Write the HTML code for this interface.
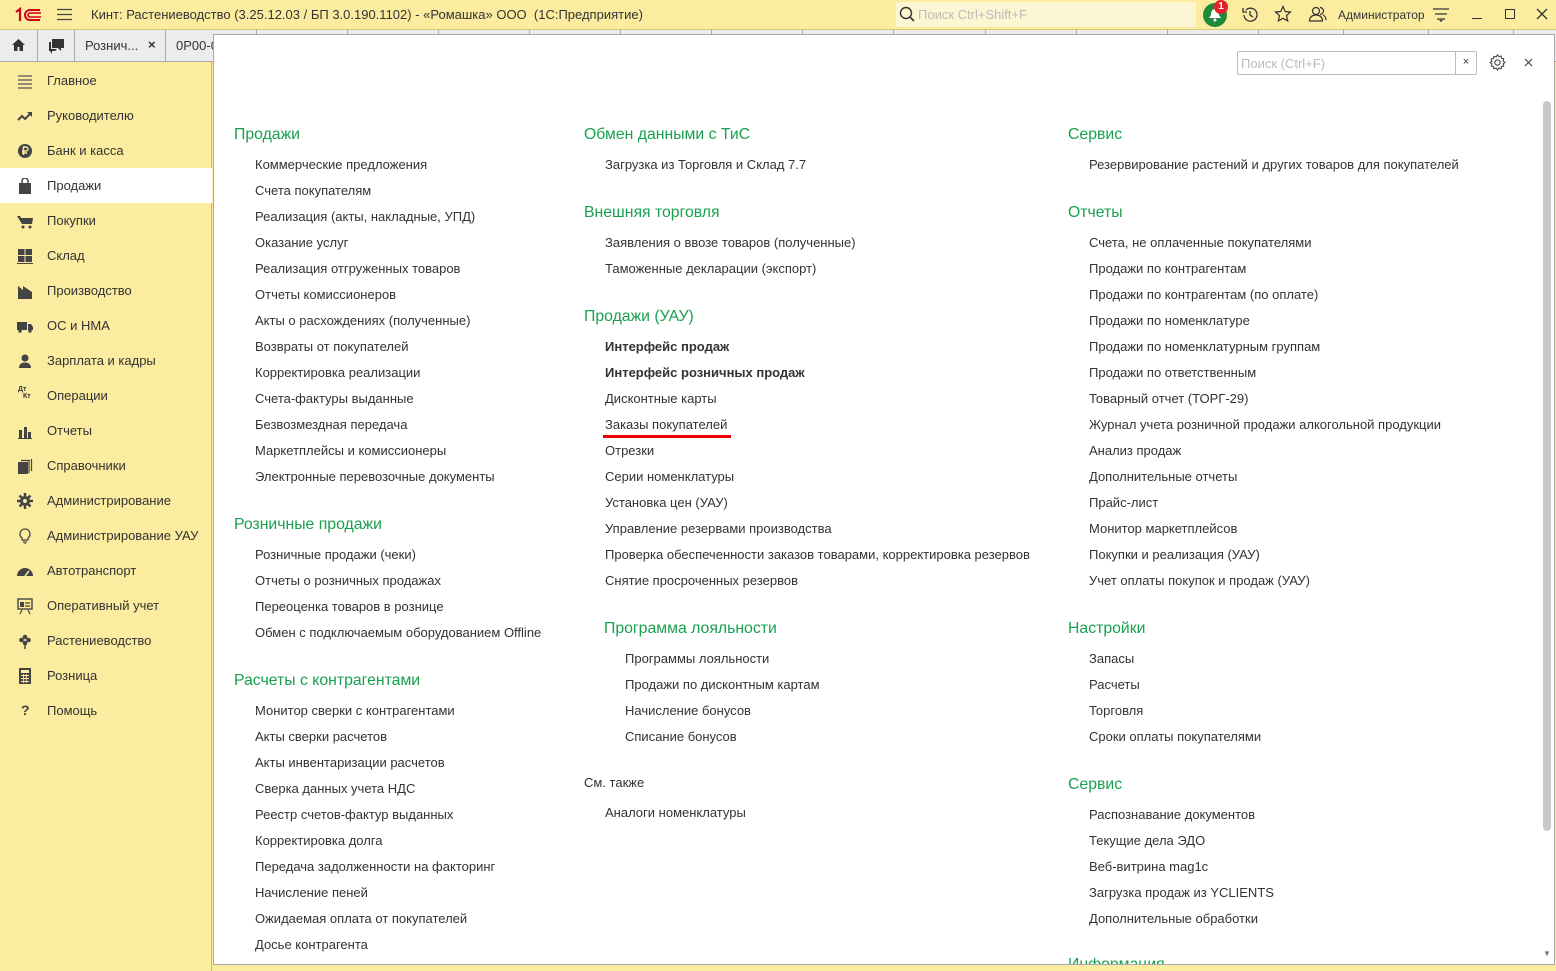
<!DOCTYPE html>
<html><head><meta charset="utf-8"><style>
*{margin:0;padding:0;box-sizing:border-box}
body{width:1556px;height:971px;overflow:hidden;background:#fbeca0;font-family:"Liberation Sans",sans-serif;font-size:13px;color:#333;position:relative}
.title{position:absolute;left:0;top:0;width:1556px;height:30px;background:#fbeca0;border-bottom:1px solid #d9c97a}
.tabs{position:absolute;left:0;top:30px;width:1556px;height:32px;background:#ececec;border-bottom:1px solid #aaa}
.tab{position:absolute;top:0;height:32px;border-right:1px solid #aaa}
.side{position:absolute;left:0;top:62px;width:212px;height:909px;background:#fbeca0;border-right:1px solid #b8b8b8}
.si{position:absolute;left:0;width:212px;height:35px;line-height:35px;padding-left:47px;font-size:13px;color:#333}
.si.sel{background:#fff}
.ic{position:absolute;left:17px;top:10px;width:16px;height:16px}
.panel{position:absolute;left:213px;top:34px;width:1342px;height:931px;background:#fff;border:1px solid #aaa;overflow:hidden}
.g{position:absolute}
.g h3{font-weight:normal;font-size:15.8px;color:#19a04f;line-height:20px;height:22px;padding-top:2px;white-space:nowrap}
.g ul{list-style:none;margin-top:7px;padding-left:21px}
.g li{line-height:26px;height:26px;white-space:nowrap}
.b{font-weight:bold}
</style></head><body>
<div class="title">
 <svg style="position:absolute;left:14px;top:7px" width="30" height="16" viewBox="0 0 30 16"><path d="M2 5l4-3v12" stroke="#d2001e" stroke-width="2.2" fill="none"/><path d="M26 3H16a5 5 0 0 0 0 10h10" stroke="#d2001e" stroke-width="2" fill="none"/><path d="M27 6H16a2 2 0 0 0 0 4h11" stroke="#d2001e" stroke-width="1.6" fill="none"/></svg>
 <svg style="position:absolute;left:57px;top:8px" width="15" height="13"><path d="M0 1.5h15M0 6.5h15M0 11.5h15" stroke="#444" stroke-width="1.3"/></svg>
 <div style="position:absolute;left:91px;top:7px;font-size:13px;color:#333">Кинт: Растениеводство (3.25.12.03 / БП 3.0.190.1102) - «Ромашка» ООО &nbsp;(1С:Предприятие)</div>
 <div style="position:absolute;left:896px;top:2px;width:300px;height:25px;background:#fdf6d3;border-radius:2px"></div>
 <svg style="position:absolute;left:899px;top:6px" width="16" height="17"><circle cx="7" cy="7" r="5.5" stroke="#333" stroke-width="1.4" fill="none"/><path d="M11 11l4 4" stroke="#333" stroke-width="1.6"/></svg>
 <div style="position:absolute;left:918px;top:7px;color:#bbb">Поиск Ctrl+Shift+F</div>
 <div style="position:absolute;left:1203px;top:3px;width:24px;height:24px;border-radius:50%;background:#1e8a3c"></div>
 <svg style="position:absolute;left:1208px;top:7px" width="14" height="16"><path d="M7 2c-3 0-4 3-4 6l-2 3h12l-2-3c0-3-1-6-4-6z" fill="#fff"/><circle cx="7" cy="13" r="1.5" fill="#fff"/></svg>
 <div style="position:absolute;left:1214px;top:0;width:14px;height:14px;border-radius:50%;background:#e4202c;color:#fff;font-size:10px;font-weight:bold;text-align:center;line-height:14px">1</div>
 <svg style="position:absolute;left:1241px;top:6px" width="18" height="18"><path d="M3 9a6.5 6.5 0 1 0 2-5" stroke="#333" stroke-width="1.3" fill="none"/><path d="M2 2v4h4" stroke="#333" stroke-width="1.3" fill="none"/><path d="M9 5v4l3 2" stroke="#333" stroke-width="1.3" fill="none"/></svg>
 <svg style="position:absolute;left:1274px;top:5px" width="18" height="18"><path d="M9 1.5l2.2 5 5.3.5-4 3.6 1.2 5.3L9 13.2 4.3 15.9l1.2-5.3-4-3.6 5.3-.5z" stroke="#333" stroke-width="1.2" fill="none"/></svg>
 <svg style="position:absolute;left:1308px;top:5px" width="19" height="18"><circle cx="8" cy="6" r="3.5" stroke="#333" stroke-width="1.2" fill="none"/><path d="M1.5 16c0-4 3-6 6.5-6s6.5 2 6.5 6z" stroke="#333" stroke-width="1.2" fill="none"/><path d="M12 2.5a3.5 3.5 0 0 1 0 7M15 10c2 1 3 3 3 5" stroke="#333" stroke-width="1.2" fill="none"/></svg>
 <div style="position:absolute;left:1338px;top:8px;font-size:12px">Администратор</div>
 <svg style="position:absolute;left:1433px;top:8px" width="16" height="15"><path d="M0 1h16M2 6h12M4 11h8" stroke="#333" stroke-width="1.3"/><path d="M6 12l2 2 2-2z" fill="#333"/></svg>
 <div style="position:absolute;left:1472px;top:18px;width:10px;height:1px;background:#333"></div>
 <div style="position:absolute;left:1505px;top:9px;width:10px;height:10px;border:1.3px solid #333"></div>
 <svg style="position:absolute;left:1536px;top:8px" width="12" height="12"><path d="M1 1l10 10M11 1L1 11" stroke="#333" stroke-width="1.3"/></svg>
</div>
<div class="tabs">
 <div class="tab" style="left:0;width:38px"><svg style="position:absolute;left:11px;top:8px" width="15" height="14"><path d="M7.5 1L1 7h2v6h3.5V9h2v4H12V7h2z" fill="#333"/></svg></div>
 <div class="tab" style="left:38px;width:37px"><svg style="position:absolute;left:10px;top:8px" width="17" height="16"><path d="M4 1h12v9h-3v3l-3-3H4z" fill="#333"/><path d="M1 4h2v7h6l-2 2H4v3l-2-3H1z" fill="#333"/></svg></div>
 <div class="tab" style="left:75px;width:91px"><span style="position:absolute;left:10px;top:8px">Рознич...</span><span style="position:absolute;left:73px;top:7px;font-weight:bold">×</span></div>
 <div class="tab" style="left:166px;width:91px"><span style="position:absolute;left:10px;top:8px">0Р00-0</span></div>
 <div class="tab" style="left:257px;width:91px"></div><div class="tab" style="left:348px;width:91px"></div><div class="tab" style="left:439px;width:91px"></div><div class="tab" style="left:530px;width:91px"></div><div class="tab" style="left:621px;width:91px"></div><div class="tab" style="left:712px;width:91px"></div><div class="tab" style="left:803px;width:91px"></div><div class="tab" style="left:894px;width:92px"></div><div class="tab" style="left:986px;width:91px"></div><div class="tab" style="left:1077px;width:91px"></div><div class="tab" style="left:1168px;width:91px"></div><div class="tab" style="left:1259px;width:85px"></div><div class="tab" style="left:1344px;width:85px"></div><div class="tab" style="left:1429px;width:85px"></div>
</div>
<div class="side">
 <div class="si" style="top:1px"><svg class="ic" viewBox="0 0 16 16"><path d="M1 3h14M1 7h14M1 11h14M1 15h14" stroke="#555" stroke-width="1.2"/></svg>Главное</div>
 <div class="si" style="top:36px"><svg class="ic" viewBox="0 0 16 16"><path d="M1 12l4-4 3 3 6-6" stroke="#444" stroke-width="2" fill="none"/><path d="M10 4h5v5z" fill="#444"/></svg>Руководителю</div>
 <div class="si" style="top:71px"><svg class="ic" viewBox="0 0 16 16"><circle cx="8" cy="8" r="7" fill="#444"/><path d="M6.5 12V4h2.5a2 2 0 0 1 0 4H5M5 10h5" stroke="#fbeca0" stroke-width="1.4" fill="none"/></svg>Банк и касса</div>
 <div class="si sel" style="top:106px"><svg class="ic" viewBox="0 0 16 16"><rect x="2" y="5" width="12" height="11" fill="#444"/><path d="M5 6V3a3 3 0 0 1 6 0v3" stroke="#444" stroke-width="1.5" fill="none"/></svg>Продажи</div>
 <div class="si" style="top:141px"><svg class="ic" viewBox="0 0 16 16"><path d="M0 3h3l1 2h12l-1 6H5z" fill="#444"/><circle cx="6" cy="14" r="1.5" fill="#444"/><circle cx="13" cy="14" r="1.5" fill="#444"/></svg>Покупки</div>
 <div class="si" style="top:176px"><svg class="ic" viewBox="0 0 16 16"><rect x="1" y="1" width="6.5" height="6" fill="#444"/><rect x="8.5" y="1" width="6.5" height="6" fill="#444"/><rect x="1" y="8" width="6.5" height="6" fill="#444"/><rect x="8.5" y="8" width="6.5" height="6" fill="#444"/><rect x="0" y="15" width="16" height="1" fill="#444"/></svg>Склад</div>
 <div class="si" style="top:211px"><svg class="ic" viewBox="0 0 16 16"><path d="M1 16V3l5 4V3l9 6v7z" fill="#444"/></svg>Производство</div>
 <div class="si" style="top:246px"><svg class="ic" viewBox="0 0 16 16"><rect x="0" y="4" width="10" height="8" fill="#444"/><path d="M11 6h3l2 3v3h-5z" fill="#444"/><circle cx="3" cy="13" r="1.7" fill="#444"/><circle cx="13" cy="13" r="1.7" fill="#444"/></svg>ОС и НМА</div>
 <div class="si" style="top:281px"><svg class="ic" viewBox="0 0 16 16"><circle cx="8" cy="5" r="3.5" fill="#444"/><path d="M2 15c0-4 3-5.5 6-5.5s6 1.5 6 5.5z" fill="#444"/></svg>Зарплата и кадры</div>
 <div class="si" style="top:316px"><span style="position:absolute;left:18px;top:-6px;font-size:7px;font-weight:bold">Дт</span><span style="position:absolute;left:23px;top:1px;font-size:7px;font-weight:bold">Кт</span>Операции</div>
 <div class="si" style="top:351px"><svg class="ic" viewBox="0 0 16 16"><rect x="2" y="7" width="3" height="8" fill="#444"/><rect x="7" y="4" width="3" height="11" fill="#444"/><rect x="11" y="9" width="3" height="6" fill="#444"/><rect x="1" y="15" width="14" height="1" fill="#444"/></svg>Отчеты</div>
 <div class="si" style="top:386px"><svg class="ic" viewBox="0 0 16 16"><rect x="1" y="4" width="10" height="12" fill="#444"/><path d="M12 3v12M14.5 1v12M4 2.5h9" stroke="#444" stroke-width="1.2"/></svg>Справочники</div>
 <div class="si" style="top:421px"><svg class="ic" viewBox="0 0 16 16"><circle cx="8" cy="8" r="5" fill="#444"/><path d="M8 0v16M0 8h16M2.5 2.5l11 11M13.5 2.5l-11 11" stroke="#444" stroke-width="2.5"/><circle cx="8" cy="8" r="2" fill="#fbeca0"/></svg>Администрирование</div>
 <div class="si" style="top:456px"><svg class="ic" viewBox="0 0 16 16"><path d="M8 1a5 5 0 0 0-3 9v2h6v-2a5 5 0 0 0-3-9z" stroke="#444" stroke-width="1.3" fill="none"/><path d="M6 14h4M7 16h2" stroke="#444" stroke-width="1.3"/></svg>Администрирование УАУ</div>
 <div class="si" style="top:491px"><svg class="ic" viewBox="0 0 16 16"><path d="M0 13a8 8 0 0 1 16 0z" fill="#444"/><path d="M8 13l4-5" stroke="#fbeca0" stroke-width="1.5"/></svg>Автотранспорт</div>
 <div class="si" style="top:526px"><svg class="ic" viewBox="0 0 16 16"><rect x="1" y="1" width="14" height="10" stroke="#444" stroke-width="1.4" fill="none"/><rect x="3" y="4" width="4" height="5" fill="#444"/><path d="M8 5h5M8 8h5M5 12l-2 4M11 12l2 4" stroke="#444" stroke-width="1.2"/></svg>Оперативный учет</div>
 <div class="si" style="top:561px"><svg class="ic" viewBox="0 0 16 16"><circle cx="8" cy="4" r="2.3" fill="#444"/><circle cx="4.5" cy="7" r="2.3" fill="#444"/><circle cx="11.5" cy="7" r="2.3" fill="#444"/><circle cx="8" cy="10" r="2.3" fill="#444"/><path d="M8 11v5" stroke="#444" stroke-width="1.5"/></svg>Растениеводство</div>
 <div class="si" style="top:596px"><svg class="ic" viewBox="0 0 16 16"><rect x="2" y="0" width="12" height="16" fill="#444"/><rect x="4" y="2" width="8" height="3" fill="#fbeca0"/><path d="M4 7.5h8M4 10.5h8M4 13.5h8M6.6 6v9M9.3 6v9" stroke="#fbeca0" stroke-width=".9"/></svg>Розница</div>
 <div class="si" style="top:631px"><span style="position:absolute;left:21px;font-size:14px;font-weight:bold;color:#444">?</span>Помощь</div>
</div>
<div class="panel">
 <div style="position:absolute;left:1023px;top:16px;width:240px;height:24px;border:1px solid #bbb;border-radius:2px"><span style="position:absolute;left:3px;top:4px;color:#bbb;font-size:13px">Поиск (Ctrl+F)</span><div style="position:absolute;right:0;top:0;width:21px;height:22px;border-left:1px solid #bbb;text-align:center;line-height:21px;font-size:11px">×</div></div>
 <svg style="position:absolute;left:1275px;top:19px" width="17" height="17" viewBox="0 0 16 16"><path d="M8 0.8l1.3 1.7 2.1-.6.3 2.1 2.1.4-.6 2.1L15 8l-1.7 1.3.6 2.1-2.1.3-.4 2.1-2.1-.6L8 15l-1.3-1.7-2.1.6-.3-2.1-2.1-.4.6-2.1L1 8l1.7-1.3-.6-2.1 2.1-.3.4-2.1 2.1.6z" stroke="#444" stroke-width="1" fill="none"/><circle cx="8" cy="8" r="2.5" stroke="#444" stroke-width="1" fill="none"/></svg>
 <svg style="position:absolute;left:1310px;top:23px" width="9" height="9"><path d="M1 1l7 7M8 1L1 8" stroke="#444" stroke-width="1.2"/></svg>
 <div style="position:absolute;left:1329px;top:66px;width:8px;height:730px;background:#c8c8c8;border-radius:4px"></div>
 <div style="position:absolute;left:1329px;top:914px;font-size:8px;color:#777">▼</div>

 <div class="g" style="left:20px;top:88px"><h3>Продажи</h3><ul><li>Коммерческие предложения</li><li>Счета покупателям</li><li>Реализация (акты, накладные, УПД)</li><li>Оказание услуг</li><li>Реализация отгруженных товаров</li><li>Отчеты комиссионеров</li><li>Акты о расхождениях (полученные)</li><li>Возвраты от покупателей</li><li>Корректировка реализации</li><li>Счета-фактуры выданные</li><li>Безвозмездная передача</li><li>Маркетплейсы и комиссионеры</li><li>Электронные перевозочные документы</li></ul></div>
 <div class="g" style="left:20px;top:478px"><h3>Розничные продажи</h3><ul><li>Розничные продажи (чеки)</li><li>Отчеты о розничных продажах</li><li>Переоценка товаров в рознице</li><li>Обмен с подключаемым оборудованием Offline</li></ul></div>
 <div class="g" style="left:20px;top:634px"><h3>Расчеты с контрагентами</h3><ul><li>Монитор сверки с контрагентами</li><li>Акты сверки расчетов</li><li>Акты инвентаризации расчетов</li><li>Сверка данных учета НДС</li><li>Реестр счетов-фактур выданных</li><li>Корректировка долга</li><li>Передача задолженности на факторинг</li><li>Начисление пеней</li><li>Ожидаемая оплата от покупателей</li><li>Досье контрагента</li></ul></div>

 <div class="g" style="left:370px;top:88px"><h3>Обмен данными с ТиС</h3><ul><li>Загрузка из Торговля и Склад 7.7</li></ul></div>
 <div class="g" style="left:370px;top:166px"><h3>Внешняя торговля</h3><ul><li>Заявления о ввозе товаров (полученные)</li><li>Таможенные декларации (экспорт)</li></ul></div>
 <div class="g" style="left:370px;top:270px"><h3>Продажи (УАУ)</h3><ul><li class="b">Интерфейс продаж</li><li class="b">Интерфейс розничных продаж</li><li>Дисконтные карты</li><li>Заказы покупателей</li><li>Отрезки</li><li>Серии номенклатуры</li><li>Установка цен (УАУ)</li><li>Управление резервами производства</li><li>Проверка обеспеченности заказов товарами, корректировка резервов</li><li>Снятие просроченных резервов</li></ul></div>
 <div style="position:absolute;left:389px;top:400px;width:128px;height:3px;background:#e00"></div>
 <div class="g" style="left:390px;top:582px"><h3>Программа лояльности</h3><ul><li>Программы лояльности</li><li>Продажи по дисконтным картам</li><li>Начисление бонусов</li><li>Списание бонусов</li></ul></div>
 <div style="position:absolute;left:370px;top:740px;line-height:16px">См. также</div>
 <div style="position:absolute;left:391px;top:770px;line-height:16px">Аналоги номенклатуры</div>

 <div class="g" style="left:854px;top:88px"><h3>Сервис</h3><ul><li>Резервирование растений и других товаров для покупателей</li></ul></div>
 <div class="g" style="left:854px;top:166px"><h3>Отчеты</h3><ul><li>Счета, не оплаченные покупателями</li><li>Продажи по контрагентам</li><li>Продажи по контрагентам (по оплате)</li><li>Продажи по номенклатуре</li><li>Продажи по номенклатурным группам</li><li>Продажи по ответственным</li><li>Товарный отчет (ТОРГ-29)</li><li>Журнал учета розничной продажи алкогольной продукции</li><li>Анализ продаж</li><li>Дополнительные отчеты</li><li>Прайс-лист</li><li>Монитор маркетплейсов</li><li>Покупки и реализация (УАУ)</li><li>Учет оплаты покупок и продаж (УАУ)</li></ul></div>
 <div class="g" style="left:854px;top:582px"><h3>Настройки</h3><ul><li>Запасы</li><li>Расчеты</li><li>Торговля</li><li>Сроки оплаты покупателями</li></ul></div>
 <div class="g" style="left:854px;top:738px"><h3>Сервис</h3><ul><li>Распознавание документов</li><li>Текущие дела ЭДО</li><li>Веб-витрина mag1c</li><li>Загрузка продаж из YCLIENTS</li><li>Дополнительные обработки</li></ul></div>
 <div class="g" style="left:854px;top:918px"><h3>Информация</h3></div>
</div>
</body></html>
